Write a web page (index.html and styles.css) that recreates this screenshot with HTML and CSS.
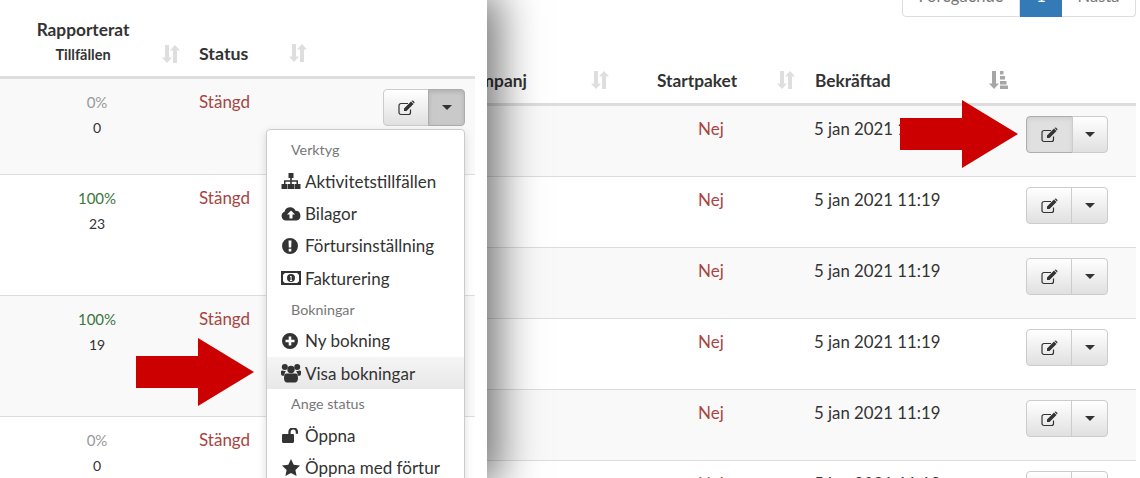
FILE: index.html
```html
<!DOCTYPE html>
<html lang="sv">
<head>
<meta charset="utf-8">
<title>Aktiviteter</title>
<link rel="stylesheet" href="styles.css">
</head>
<body>
<svg class="defs" width="0" height="0" aria-hidden="true">
  <symbol id="i-sort" viewBox="0 0 18 18"><path d="M3 0h4v12.500h3L5 18 0 12.500h3zM11 18V5.500H8L13 0l5 5.500h-3V18z"/></symbol>
  <symbol id="i-amount" viewBox="0 0 19 18"><path d="M3 0h4v12.500h3L5 18 0 12.500h3zM11 0h3.500v3.500H11zM11 5h5v3.500h-5zM11 10h6.500v3.500H11zM11 14.500h8V18h-8z"/></symbol>
  <symbol id="i-edit" viewBox="0 0 17 16"><path d="M12.500 9.500v3A2 2 0 0 1 10.500 14.500H3A2 2 0 0 1 1 12.500V5.500A2 2 0 0 1 3 3.500H10" fill="none" stroke="currentColor" stroke-width="1.200"/><path d="M6 8.500 13 1.500 15.500 4 8.500 11H6zM13.800.800a1 1 0 0 1 1.400 0L16.200 1.800a1 1 0 0 1 0 1.400L16 3.400 13.600 1z"/></symbol>
  <symbol id="i-sitemap" viewBox="0 0 20 16"><path d="M7.500 0h5v5h-1.700v2.200H17V11h2.500v5h-6v-5H15.500V8.800H10.800V11H13v5H7v-5h2.200V8.800H4.500V11H6.500v5h-6v-5H3V7.200H9.200V5H7.500z"/></symbol>
  <symbol id="i-cloud" viewBox="0 0 20 16"><path fill-rule="evenodd" d="M5 14.500A4.500 4.500 0 0 1 3.500 5.800 5.800 5.800 0 0 1 14.500 4.800 4.900 4.900 0 0 1 15.500 14.500zM10 4.500 6 8.500H8.500V12.500H11.500V8.500H14z"/></symbol>
  <symbol id="i-excl" viewBox="0 0 16 16"><path fill-rule="evenodd" d="M8 0a8 8 0 1 0 0 16A8 8 0 0 0 8 0zM6.500 2.500h3l-.3 7H6.800zM6.700 10.800h2.600v2.600H6.700z"/></symbol>
  <symbol id="i-money" viewBox="0 0 20 14"><path fill-rule="evenodd" d="M0 0h20v14H0zM3.500 2A1.500 1.500 0 0 1 2 3.500v7A1.500 1.500 0 0 1 3.500 12h13a1.500 1.500 0 0 1 1.500-1.500v-7A1.500 1.500 0 0 1 16.500 2zM10 3a4 4 0 1 1 0 8 4 4 0 0 1 0-8zM9 5v1h.6v3H9v1h2.200V9h-.6V5z"/></symbol>
  <symbol id="i-plus" viewBox="0 0 16 16"><path fill-rule="evenodd" d="M8 0a8 8 0 1 0 0 16A8 8 0 0 0 8 0zM6.700 3.500h2.600v3.200h3.200v2.600H9.300v3.200H6.700V9.300H3.500V6.700h3.200z"/></symbol>
  <symbol id="i-users" viewBox="0 0 20 19"><circle cx="10" cy="6" r="3.700"/><circle cx="3.800" cy="3.500" r="3"/><circle cx="16.200" cy="3.500" r="3"/><path d="M5.500 10h9c1.800 0 2.500 2 2.500 5 0 2.300-1.200 4-3 4H6c-1.800 0-3-1.700-3-4 0-3 .7-5 2.500-5zM0 8C0 7 1 7 2 7c1 .6 2 .6 3 .3-.5.800-1.500 2-1.800 5H1.500C.5 12.300 0 11 0 10zM20 8C20 7 19 7 18 7c-1 .6-2 .6-3 .3.500.800 1.500 2 1.800 5h1.700c1 0 1.500-1.300 1.500-2.300z"/></symbol>
  <symbol id="i-unlock" viewBox="0 0 17 15"><path d="M1.200 6h9.600c.6 0 1.200.5 1.200 1.200v6.600c0 .7-.6 1.200-1.200 1.200H1.200C.6 15 0 14.500 0 13.800V7.200C0 6.500.6 6 1.200 6z"/><path d="M7.500 6V4a3.700 3.700 0 0 1 7.400 0V5.800" fill="none" stroke="currentColor" stroke-width="2.300"/></symbol>
  <symbol id="i-star" viewBox="0 0 18 17"><path d="M9 0l2.700 5.800 6.300.8-4.600 4.300 1.200 6.100L9 14l-5.600 3 1.200-6.100L0 6.600l6.300-.8z"/></symbol>
  <symbol id="i-arrow" viewBox="0 0 118 68"><path d="M0 18h62V0l56 34-56 34V50H0z"/></symbol>
</svg>

<div class="stage">
  <main class="main-panel">
    <nav class="pager">
      <span class="pg pg-first">Föregående</span>
      <span class="pg pg-on">1</span>
      <span class="pg pg-last">Nästa</span>
    </nav>
    <div class="thead r-grid">
      <div class="th c-kampanj"><b>Kampanj</b><svg class="sort"><use href="#i-sort"/></svg></div>
      <div class="th c-start"><b>Startpaket</b><svg class="sort"><use href="#i-sort"/></svg></div>
      <div class="th c-date"><b>Bekräftad</b><svg class="sort sort-amt"><use href="#i-amount"/></svg></div>
      <div></div>
    </div>
    <div class="tr r-grid odd">
      <div></div><div class="danger center">Nej</div><div class="date">5 jan 2021 11:19</div>
      <div class="btn-group pressed"><span class="btn b-edit"><svg class="ic-edit"><use href="#i-edit"/></svg></span><span class="btn b-caret"><i class="caret"></i></span></div>
    </div>
    <div class="tr r-grid">
      <div></div><div class="danger center">Nej</div><div class="date">5 jan 2021 11:19</div>
      <div class="btn-group"><span class="btn b-edit"><svg class="ic-edit"><use href="#i-edit"/></svg></span><span class="btn b-caret"><i class="caret"></i></span></div>
    </div>
    <div class="tr r-grid odd">
      <div></div><div class="danger center">Nej</div><div class="date">5 jan 2021 11:19</div>
      <div class="btn-group"><span class="btn b-edit"><svg class="ic-edit"><use href="#i-edit"/></svg></span><span class="btn b-caret"><i class="caret"></i></span></div>
    </div>
    <div class="tr r-grid">
      <div></div><div class="danger center">Nej</div><div class="date">5 jan 2021 11:19</div>
      <div class="btn-group"><span class="btn b-edit"><svg class="ic-edit"><use href="#i-edit"/></svg></span><span class="btn b-caret"><i class="caret"></i></span></div>
    </div>
    <div class="tr r-grid odd">
      <div></div><div class="danger center">Nej</div><div class="date">5 jan 2021 11:19</div>
      <div class="btn-group"><span class="btn b-edit"><svg class="ic-edit"><use href="#i-edit"/></svg></span><span class="btn b-caret"><i class="caret"></i></span></div>
    </div>
    <div class="tr r-grid">
      <div></div><div class="danger center">Nej</div><div class="date">5 jan 2021 11:19</div>
      <div class="btn-group"><span class="btn b-edit"><svg class="ic-edit"><use href="#i-edit"/></svg></span><span class="btn b-caret"><i class="caret"></i></span></div>
    </div>
    <svg class="arrow arrow-right"><use href="#i-arrow"/></svg>
  </main>

  <aside class="side-panel">
    <div class="l-head l-grid">
      <div class="th-rap">
        <div class="th-stack"><b class="rap">Rapporterat</b><b class="till">Tillfällen</b></div>
        <svg class="sort"><use href="#i-sort"/></svg>
      </div>
      <div class="th-status"><b>Status</b><svg class="sort"><use href="#i-sort"/></svg></div>
      <div></div>
    </div>
    <div class="l-row l-grid odd h-first">
      <div class="pct"><span class="muted">0%</span><span class="num">0</span></div>
      <div class="danger">Stängd</div>
      <div class="btn-group open"><span class="btn b-edit"><svg class="ic-edit"><use href="#i-edit"/></svg></span><span class="btn b-caret"><i class="caret"></i></span></div>
    </div>
    <div class="l-row l-grid h-std">
      <div class="pct"><span class="success">100%</span><span class="num">23</span></div>
      <div class="danger">Stängd</div>
      <div class="btn-group"><span class="btn b-edit"><svg class="ic-edit"><use href="#i-edit"/></svg></span><span class="btn b-caret"><i class="caret"></i></span></div>
    </div>
    <div class="l-row l-grid odd h-std">
      <div class="pct"><span class="success">100%</span><span class="num">19</span></div>
      <div class="danger">Stängd</div>
      <div class="btn-group"><span class="btn b-edit"><svg class="ic-edit"><use href="#i-edit"/></svg></span><span class="btn b-caret"><i class="caret"></i></span></div>
    </div>
    <div class="l-row l-grid h-std">
      <div class="pct"><span class="muted">0%</span><span class="num">0</span></div>
      <div class="danger">Stängd</div>
      <div class="btn-group"><span class="btn b-edit"><svg class="ic-edit"><use href="#i-edit"/></svg></span><span class="btn b-caret"><i class="caret"></i></span></div>
    </div>

    <ul class="menu">
      <li class="m-head">Verktyg</li>
      <li class="m-item"><svg class="mi mi-w"><use href="#i-sitemap"/></svg>Aktivitetstillfällen</li>
      <li class="m-item"><svg class="mi mi-w"><use href="#i-cloud"/></svg>Bilagor</li>
      <li class="m-item"><svg class="mi"><use href="#i-excl"/></svg>Förtursinställning</li>
      <li class="m-item"><svg class="mi mi-w"><use href="#i-money"/></svg>Fakturering</li>
      <li class="m-head">Bokningar</li>
      <li class="m-item"><svg class="mi"><use href="#i-plus"/></svg>Ny bokning</li>
      <li class="m-item m-hover"><svg class="mi mi-w"><use href="#i-users"/></svg>Visa bokningar</li>
      <li class="m-head">Ange status</li>
      <li class="m-item"><svg class="mi mi-lock"><use href="#i-unlock"/></svg>Öppna</li>
      <li class="m-item"><svg class="mi mi-star"><use href="#i-star"/></svg>Öppna med förtur</li>
    </ul>
    <svg class="arrow arrow-left"><use href="#i-arrow"/></svg>
  </aside>
</div>
</body>
</html>
```
FILE: styles.css
```css
* { box-sizing: border-box; }
html, body { margin: 0; padding: 0; }
body {
  width: 1140px;
  height: 478px;
  overflow: hidden;
  background: #fff;
  color: #333;
  font-family: "Lato", "Open Sans", sans-serif;
  font-size: 17px;
}
b { font-weight: 700; }
.defs { position: absolute; }
.stage { position: relative; width: 1140px; height: 478px; overflow: hidden; }

/* main table */
.main-panel { padding-left: 459px; width: 1136px; }
.pager {
  height: 17px;
  display: flex;
  justify-content: flex-end;
  align-items: flex-end;
  overflow: hidden;
}
.pg {
  height: 34px;
  flex: none;
  display: flex;
  align-items: center;
  justify-content: center;
  border: 1px solid #ddd;
  padding-bottom: 8px;
  color: #777;
  font-size: 16.500px;
}
.pg-first { width: 118px; border-radius: 0 0 0 4px; }
.pg-on { width: 42px; background: #337ab7; border-color: #337ab7; color: #fff; }
.pg-last { width: 74px; border-left: 0; border-radius: 0 0 4px 0; }

.r-grid { display: grid; grid-template-columns: 191px 164px 212px 110px; }
.thead { height: 89px; border-bottom: 3px solid #ddd; align-items: end; }
.th { display: flex; align-items: center; height: 46px; font-size: 17.300px; }
.c-kampanj .sort { margin-left: 64px; }
.c-start { padding-left: 7px; }
.c-start .sort { margin-left: 40px; }
.c-date { padding-left: 1px; }
.c-date .sort { margin-left: 99px; }
.sort { width: 18px; height: 18px; fill: #dedede; flex: none; }
.sort-amt { width: 19px; fill: #a6a6a6; }

.tr { height: 71px; border-bottom: 1px solid #ddd; padding-top: 10px; }
.odd { background: #f9f9f9; }
.center { text-align: center; padding-right: 42px; }
.danger { color: #a94442; }
.success { color: #3c763d; }
.muted { color: #999; }
.date { padding-top: 2px; font-size: 16.800px; }
.tr .danger { padding-top: 2px; }

/* button group */
.btn-group { display: flex; width: 82px; height: 37px; }
.btn {
  display: flex;
  align-items: center;
  justify-content: center;
  height: 37px;
  border: 1px solid #ccc;
  background: linear-gradient(#fff, #e0e0e0);
}
.b-edit { width: 46px; border-radius: 4px 0 0 4px; }
.b-caret { width: 37px; margin-left: -1px; border-radius: 0 4px 4px 0; }
.ic-edit { width: 17px; height: 16px; fill: #333; color: #333; }
.caret {
  width: 0;
  height: 0;
  border-top: 5px solid #333;
  border-left: 5px solid transparent;
  border-right: 5px solid transparent;
}
.pressed .b-edit { width: 47px; background: #e0e0e0; border-color: #adadad; box-shadow: inset 0 2px 4px rgba(0, 0, 0, .08); }
.pressed .b-caret { width: 36px; }
.open .b-caret { background: #c9c9c9; border-color: #adadad; box-shadow: inset 0 2px 4px rgba(0, 0, 0, .12); }

/* overlaid left panel */
.side-panel {
  position: absolute;
  left: 0;
  top: 0;
  width: 487px;
  height: 478px;
  background: #fff;
  padding-right: 12px;
  box-shadow: 6px 0 40px 6px rgba(0, 0, 0, .55);
}
.l-grid { display: grid; grid-template-columns: 194px 189px 82px 10px; }
.l-head { height: 79px; border-bottom: 3px solid #ddd; align-items: end; }
.th-rap { display: flex; align-items: flex-end; padding-bottom: 9px; }
.th-stack { width: 166px; display: flex; flex-direction: column; align-items: center; }
.rap { font-size: 17.300px; line-height: 26px; }
.till { font-size: 14.500px; line-height: 24px; }
.th-rap .sort { margin-left: -4px; margin-bottom: 4px; }
.th-status { padding-left: 5px; display: flex; align-items: center; padding-bottom: 12px; font-size: 17.800px; }
.th-status .sort { margin-left: 41px; }
.l-row { border-bottom: 1px solid #ddd; padding-top: 10px; }
.h-first { height: 96px; }
.h-std { height: 121px; }
.pct { display: flex; flex-direction: column; align-items: center; font-size: 15px; padding-top: 4px; }
.pct .num { font-size: 14px; margin-top: 8px; color: #333; }
.l-row .danger { padding: 2px 0 0 5px; }

/* dropdown */
.menu {
  position: absolute;
  left: 266px;
  top: 129px;
  width: 199px;
  margin: 0;
  padding: 5px 0 0;
  list-style: none;
  background: #fff;
  border: 1px solid #ccc;
  border-radius: 4px;
  box-shadow: 0 3px 8px rgba(0, 0, 0, .15);
  height: 360px;
}
.m-head { height: 30px; padding-left: 24px; line-height: 30px; font-size: 14.300px; color: #777; }
.m-item {
  display: flex;
  align-items: center;
  height: 32.400px;
  padding-left: 14px;
  white-space: nowrap;
}
.mi { width: 16px; height: 16px; fill: #333; color: #333; margin: 0 7px 0 1px; flex: none; }
.mi-w { width: 20px; height: 20px; margin: 0 4px 0 0; }
.mi-lock { width: 17px; height: 15px; margin: 0 6px 0 1px; }
.mi-star { width: 18px; height: 17px; margin: 0 5px 0 1px; }
.m-hover { background: linear-gradient(#f5f5f5, #e8e8e8); }

.arrow { position: absolute; width: 118px; height: 68px; fill: #cc0000; }
.arrow-left { left: 136px; top: 338px; }
.arrow-right { left: 900px; top: 100px; }
```
